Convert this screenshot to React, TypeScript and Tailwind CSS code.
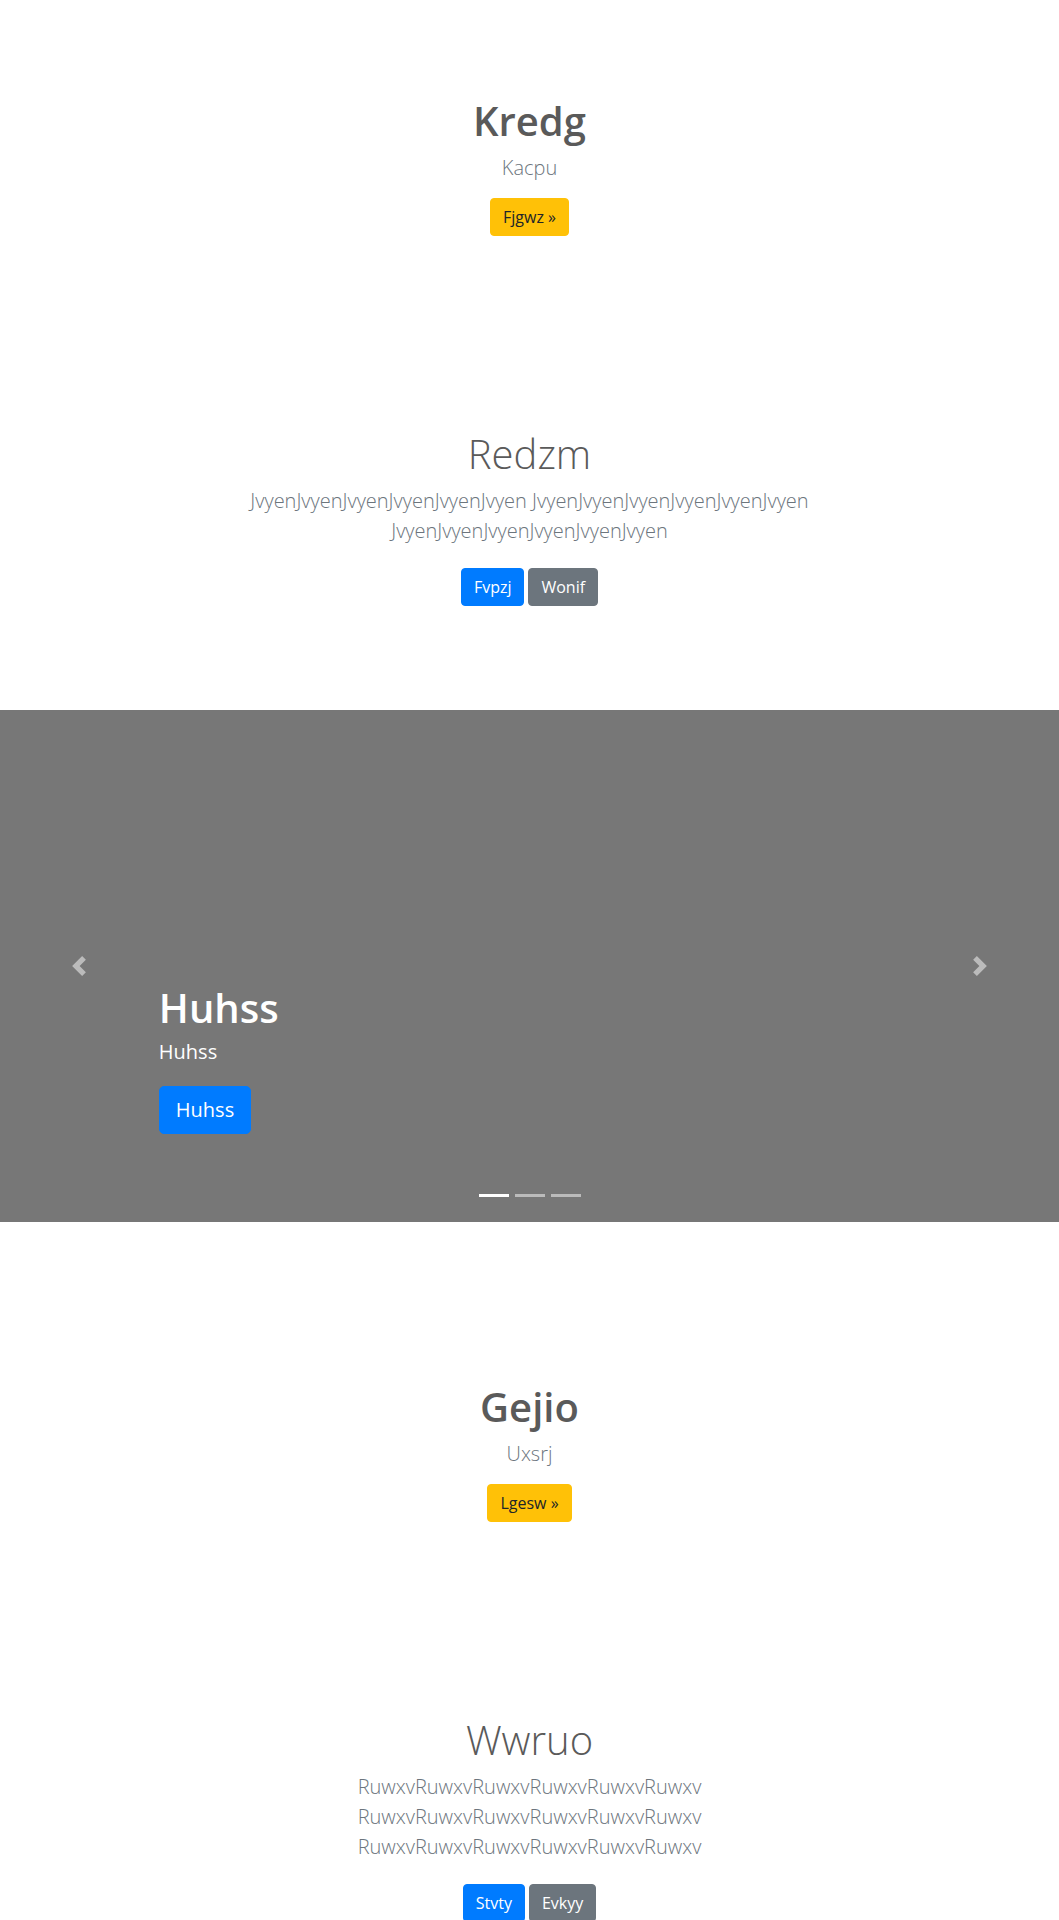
import React from 'react';

const jvyen = 'JvyenJvyenJvyenJvyenJvyenJvyen';
const ruwxv = 'RuwxvRuwxvRuwxvRuwxvRuwxvRuwxv';

function Hero({ title, sub, cta }: { title: string; sub: string; cta: string }) {
  return (
    <section className="pt-[97px] pb-[97px] text-center">
      <h1 className="mb-2 text-[40px] leading-[48px] font-semibold text-[#5a5a5a]">{title}</h1>
      <p className="mb-[15px] text-[20px] leading-[30px] font-light text-[#6c757d]">{sub}</p>
      <a className="inline-block rounded border border-[#ffc107] bg-[#ffc107] px-3 py-1.5 text-base leading-6 text-[#212529]">
        {cta} »
      </a>
    </section>
  );
}

function Feature({
  title,
  text,
  primary,
  secondary,
}: {
  title: string;
  text: string;
  primary: string;
  secondary: string;
}) {
  return (
    <section className="pt-[97px] pb-[104px] text-center">
      <h1 className="mb-2 text-[40px] leading-[48px] font-light text-[#5a5a5a]">{title}</h1>
      <p className="mx-auto max-w-[610px] text-[20px] leading-[30px] font-light text-[#6c757d]">{text}</p>
      <div className="mt-[22px] flex justify-center gap-1">
        <a className="inline-block rounded border border-[#007bff] bg-[#007bff] px-3 py-1.5 text-base leading-6 text-white">
          {primary}
        </a>
        <a className="inline-block rounded border border-[#6c757d] bg-[#6c757d] px-3 py-1.5 text-base leading-6 text-white">
          {secondary}
        </a>
      </div>
    </section>
  );
}

function Chevron({ dir }: { dir: 'left' | 'right' }) {
  const d =
    dir === 'left'
      ? 'M5.25 0l-4 4 4 4 1.5-1.5-2.5-2.5 2.5-2.5-1.5-1.5z'
      : 'M2.75 0l-1.5 1.5 2.5 2.5-2.5 2.5 1.5 1.5 4-4-4-4z';
  return (
    <svg width="20" height="20" viewBox="0 0 8 8" className="opacity-50">
      <path d={d} fill="#fff" />
    </svg>
  );
}

function Carousel() {
  return (
    <div className="relative mb-16 h-[512px] bg-[#777]">
      <div className="flex h-full flex-col items-start justify-end px-[15%] pb-[88px] text-white">
        <h1 className="text-[40px] leading-[48px] font-semibold">Huhss</h1>
        <p className="mt-[5px] text-[20px] leading-[30px]">Huhss</p>
        <a className="mt-[19px] inline-block rounded-[5px] border border-[#007bff] bg-[#007bff] px-4 py-2 text-[20px] leading-[30px] text-white">
          Huhss
        </a>
      </div>
      <span className="absolute top-0 left-0 flex h-full w-[15%] items-center justify-center">
        <Chevron dir="left" />
      </span>
      <span className="absolute top-0 right-0 flex h-full w-[15%] items-center justify-center">
        <Chevron dir="right" />
      </span>
      <ol className="absolute right-0 bottom-[25px] left-0 flex justify-center gap-1.5">
        <li className="h-[3px] w-[30px] bg-white" />
        <li className="h-[3px] w-[30px] bg-white/50" />
        <li className="h-[3px] w-[30px] bg-white/50" />
      </ol>
    </div>
  );
}

export default function App() {
  return (
    <main className="min-h-[1920px] bg-white font-['Open_Sans','Noto_Sans',sans-serif] text-[#5a5a5a]">
      <Hero title="Kredg" sub="Kacpu" cta="Fjgwz" />
      <Feature title="Redzm" text={`${jvyen} ${jvyen} ${jvyen}`} primary="Fvpzj" secondary="Wonif" />
      <Carousel />
      <Hero title="Gejio" sub="Uxsrj" cta="Lgesw" />
      <Feature title="Wwruo" text={`${ruwxv} ${ruwxv} ${ruwxv}`} primary="Stvty" secondary="Evkyy" />
    </main>
  );
}
